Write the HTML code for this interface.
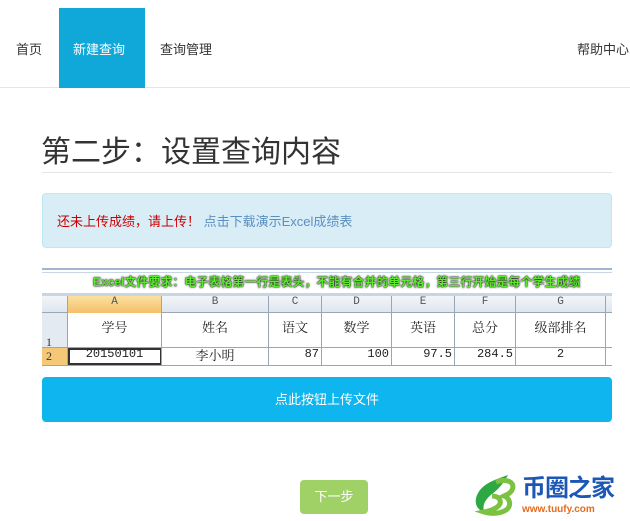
<!DOCTYPE html>
<html><head><meta charset="utf-8"><style>
*{margin:0;padding:0;box-sizing:border-box}
body{width:630px;height:521px;overflow:hidden;background:#fff;font-family:"Liberation Sans","Noto Sans CJK SC",sans-serif;color:#333;position:relative}
.a{position:absolute}
.nav{font-size:13px;color:#333}
.cell{position:absolute;border-right:1px solid #9aa6b4;text-align:center;font-family:"Liberation Mono","Noto Serif CJK SC",monospace}
</style></head><body>
<div class="a" style="left:0;top:87px;width:630px;height:1px;background:#e5e5e5"></div>
<div class="a" style="left:59px;top:8px;width:86px;height:80px;background:#10a8d8"></div>
<div class="a nav" style="left:16px;top:39px">首页</div>
<div class="a nav" style="left:73px;top:39px;color:#fff">新建查询</div>
<div class="a nav" style="left:160px;top:39px">查询管理</div>
<div class="a nav" style="left:577px;top:39px;white-space:nowrap">帮助中心</div>
<div class="a" style="left:41px;top:127px;font-size:30px;color:#333;white-space:nowrap;font-family:'Noto Sans CJK SC',sans-serif">第二步：设置查询内容</div>
<div class="a" style="left:42px;top:172px;width:570px;height:1px;background:#e5e5e5"></div>
<div class="a" style="left:42px;top:193px;width:570px;height:55px;background:#d9edf7;border:1px solid #bce8f1;border-radius:4px"></div>
<div class="a" style="left:57px;top:211px;font-size:13px;color:#c00;white-space:nowrap">还未上传成绩，请上传！ <span style="color:#5b8fc0">点击下载演示Excel成绩表</span></div>
<div class="a" style="left:42px;top:268px;width:570px;height:2px;background:#9fb6cf"></div>
<div class="a" style="left:42px;top:272px;width:570px;height:1px;background:#c9d5e3"></div>
<div class="a" style="left:42px;top:273px;width:570px;height:20px;background:#fff"></div>
<div class="a" style="left:93px;top:273px;font-size:12px;font-weight:bold;color:#5fe830;text-shadow:0 0 2px #000,0 0 1px #000;white-space:nowrap">Excel文件要求：电子表格第一行是表头，不能有合并的单元格，第三行开始是每个学生成绩</div>
<div class="a" style="left:42px;top:293px;width:570px;height:3px;background:#c9d5e3"></div>
<div class="a" style="left:42px;top:296px;width:570px;height:17px;background:linear-gradient(#f2f5f9,#dfe6ee);border-bottom:1px solid #9aa6b4"></div>
<div class="a" style="left:68px;top:296px;width:94px;height:17px;background:linear-gradient(#fbe0a0,#f4c06a)"></div>
<div class="a" style="left:42px;top:313px;width:26px;height:52px;background:#e4eaf1"></div>
<div class="a" style="left:42px;top:348px;width:26px;height:17px;background:#f5c878"></div>
<div class="a" style="left:68px;top:313px;width:544px;height:52px;background:#fff"></div>
<div class="a" style="left:42px;top:347px;width:570px;height:1px;background:#9aa6b4"></div>
<div class="a" style="left:42px;top:365px;width:570px;height:1px;background:#9aa6b4"></div>
<div class="a" style="left:68px;top:348px;width:94px;height:17px;border:2px solid #333"></div>
<div class="cell" style="left:42px;top:296px;width:26px;height:69px"></div>
<div class="a" style="left:46px;top:335px;font-size:12px;font-family:'Liberation Serif',serif">1</div>
<div class="a" style="left:46px;top:349px;font-size:12px;font-family:'Liberation Serif',serif">2</div>
<div class="cell" style="left:68px;top:296px;width:94px;height:69px;font-size:11px;color:#555">A<div style="margin-top:9px;font-size:13px;color:#222">学号</div><div style="margin-top:11px;font-size:12px;color:#222">20150101</div></div>
<div class="cell" style="left:162px;top:296px;width:107px;height:69px;font-size:11px;color:#555">B<div style="margin-top:9px;font-size:13px;color:#222">姓名</div><div style="margin-top:9px;font-size:13px;color:#222">李小明</div></div>
<div class="cell" style="left:269px;top:296px;width:53px;height:69px;font-size:11px;color:#555">C<div style="margin-top:9px;font-size:13px;color:#222">语文</div><div style="margin-top:11px;font-size:12px;color:#222;text-align:right;padding-right:2px">87</div></div>
<div class="cell" style="left:322px;top:296px;width:70px;height:69px;font-size:11px;color:#555">D<div style="margin-top:9px;font-size:13px;color:#222">数学</div><div style="margin-top:11px;font-size:12px;color:#222;text-align:right;padding-right:2px">100</div></div>
<div class="cell" style="left:392px;top:296px;width:63px;height:69px;font-size:11px;color:#555">E<div style="margin-top:9px;font-size:13px;color:#222">英语</div><div style="margin-top:11px;font-size:12px;color:#222;text-align:right;padding-right:2px">97.5</div></div>
<div class="cell" style="left:455px;top:296px;width:61px;height:69px;font-size:11px;color:#555">F<div style="margin-top:9px;font-size:13px;color:#222">总分</div><div style="margin-top:11px;font-size:12px;color:#222;text-align:right;padding-right:2px">284.5</div></div>
<div class="cell" style="left:516px;top:296px;width:90px;height:69px;font-size:11px;color:#555">G<div style="margin-top:9px;font-size:13px;color:#222">级部排名</div><div style="margin-top:11px;font-size:12px;color:#222">2</div></div>
<div class="a" style="left:42px;top:377px;width:570px;height:45px;background:#0fb5ee;border-radius:4px;color:#fff;font-size:13px;text-align:center;line-height:45px">点此按钮上传文件</div>
<div class="a" style="left:300px;top:480px;width:68px;height:34px;background:#9fd167;border-radius:4px;color:#fff;font-size:13px;text-align:center;line-height:34px">下一步</div>
<svg class="a" style="left:470px;top:472px" width="50" height="44" viewBox="0 0 50 44">
<path d="M14 40 C2 36 4 22 14 14 C20 9 30 6 38 3 C34 10 30 16 22 22 C16 27 12 32 14 40Z" fill="#2ea843"/>
<path d="M26 10 C36 6 46 10 42 18 C40 22 36 23 34 24 C40 26 42 34 36 38 C30 42 20 42 14 40 C24 38 32 34 30 28 C28 24 24 24 22 24" fill="none" stroke="#7cc242" stroke-width="5"/>
</svg>
<div class="a" style="left:522px;top:476px;font-size:24px;font-weight:bold;color:#1c57b5;letter-spacing:-1px;white-space:nowrap;line-height:26px">币圈之家</div>
<div class="a" style="left:522px;top:504px;font-size:10px;font-weight:bold;color:#e86a1c;white-space:nowrap">www.tuufy.com</div>
</body></html>
